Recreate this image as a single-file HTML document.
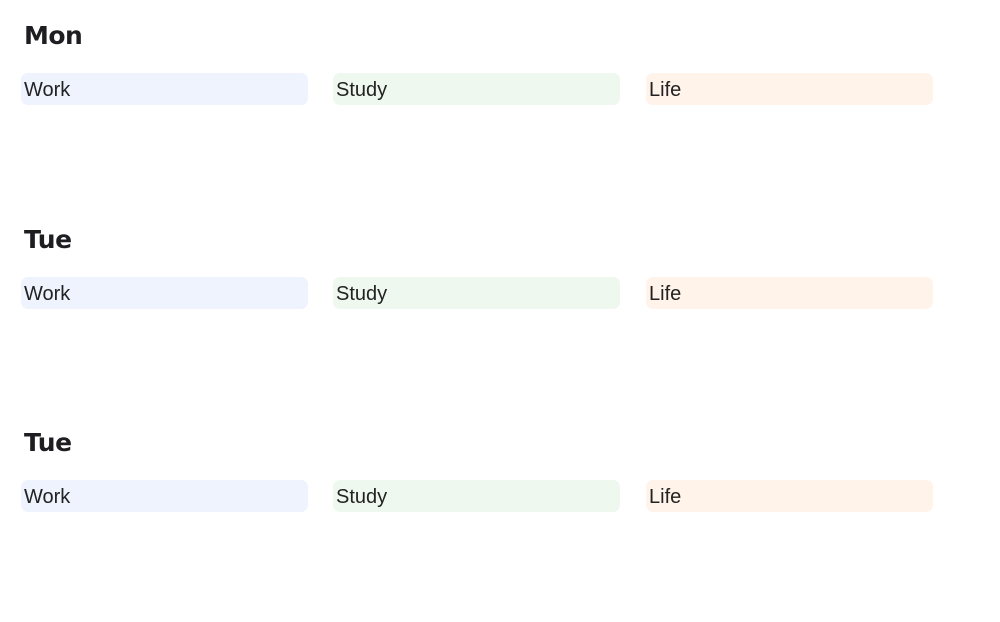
<!DOCTYPE html>
<html><head><style>
body{margin:0;background:#fff;font-family:"DejaVu Sans","Liberation Sans",sans-serif;color:#222;}
.sec{position:absolute;left:0;width:1000px;}
h2{position:absolute;left:24px;margin:0;font-size:25px;font-weight:bold;color:#1e1e22;line-height:1;letter-spacing:-0.5px}
.b{position:absolute;top:0;width:287px;height:32px;border-radius:7px;font-family:"Liberation Sans",sans-serif;font-size:20px;line-height:35px;padding-left:3px;box-sizing:border-box;color:#222;}
.w{left:21px;background:#eef3fd}.s{left:333px;background:#eef8ee}.l{left:646px;background:#fff3ea}
</style></head><body>
<div class="sec" style="top:0"><h2 style="top:23px">Mon</h2><div style="position:absolute;top:73px;left:0"><div class="b w">Work</div><div class="b s">Study</div><div class="b l">Life</div></div></div>
<div class="sec" style="top:204px"><h2 style="top:23px">Tue</h2><div style="position:absolute;top:73px;left:0"><div class="b w">Work</div><div class="b s">Study</div><div class="b l">Life</div></div></div>
<div class="sec" style="top:407px"><h2 style="top:23px">Tue</h2><div style="position:absolute;top:73px;left:0"><div class="b w">Work</div><div class="b s">Study</div><div class="b l">Life</div></div></div>
</body></html>
